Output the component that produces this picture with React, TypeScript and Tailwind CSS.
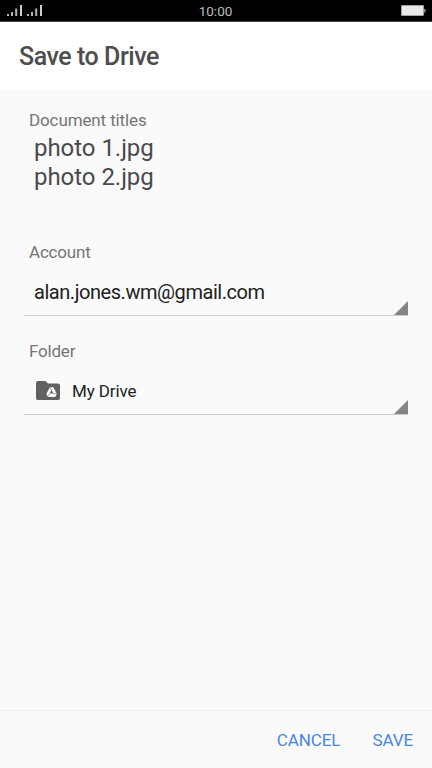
import type { ReactNode } from 'react';

function SignalIcon() {
  return (
    <svg width="16" height="12" viewBox="0 0 16 12" fill="#b4b4b4">
      <rect x="0" y="9" width="2" height="2" />
      <rect x="4" y="7" width="2" height="4" />
      <rect x="8.2" y="3.5" width="2" height="7.5" />
      <rect x="13" y="0" width="2" height="11" fill="#d0d0d0" />
    </svg>
  );
}

function BatteryIcon() {
  return (
    <svg width="25" height="12" viewBox="0 0 25 12">
      <rect x="0.5" y="0.5" width="22" height="10" rx="0.5" fill="#e8e8e8" stroke="#a0a0a0" />
      <rect x="23" y="4" width="1.5" height="3.5" fill="#8c8c8c" />
    </svg>
  );
}

function DriveFolderIcon() {
  return (
    <svg width="24" height="20" viewBox="0 0 24 20">
      <path
        d="M2.2 0H9.4L12 2.4H21.8A2.2 2.2 0 0 1 24 4.6V16.9A2.2 2.2 0 0 1 21.8 19.1H2.2A2.2 2.2 0 0 1 0 16.9V2.2A2.2 2.2 0 0 1 2.2 0Z"
        fill="#616161"
      />
      <path d="M13.9 6.2H17.2L20.9 12.8L19.2 15.9H12L10.3 12.9Z" fill="#fafafa" />
      <path d="M15.6 9.1L17.5 12.6H13.6Z" fill="#616161" />
      <path d="M13.6 12.6L12 15.6M17.2 12.7H20.8M13.9 6.4L15.5 9.3" stroke="#616161" strokeWidth="0.5" />
    </svg>
  );
}

interface SpinnerFieldProps {
  label: string;
  children: ReactNode;
}

function SpinnerField({ label, children }: SpinnerFieldProps) {
  return (
    <div className="h-[99px]">
      <p className="h-6 pl-[5px] text-[17px] leading-[25px] tracking-[-0.2px] text-[#757575]">{label}</p>
      <button className="flex h-[52px] w-full items-end justify-between border-b border-[#cbcbcb] text-left">
        <span className="flex h-full items-center pl-[10px] pt-[5px]">{children}</span>
        <svg width="14" height="14" viewBox="0 0 14 14" className="shrink-0">
          <path d="M14 0V14H0Z" fill="#858585" />
        </svg>
      </button>
    </div>
  );
}

export default function App() {
  return (
    <div className="flex h-[768px] w-[432px] flex-col bg-[#fafafa] font-['Roboto',sans-serif]">
      <div className="flex h-[22px] items-center justify-between border-b border-[#4a4a4a] bg-black pl-[7px] pr-[6px]">
        <div className="flex w-[58px] gap-1">
          <SignalIcon />
          <SignalIcon />
        </div>
        <span className="pt-px text-[13.5px] leading-5 text-[#bdbdbd]">10:00</span>
        <div className="flex w-[60px] justify-end">
          <BatteryIcon />
        </div>
      </div>

      <header className="flex h-[67px] items-center bg-white pl-[19px] pt-0.5">
        <h1 className="text-[25px] font-medium tracking-[-0.45px] text-[#4d4d4d]">Save to Drive</h1>
      </header>

      <main className="flex-1 px-6 pt-[19px]">
        <div className="h-[132px]">
          <p className="h-6 pl-[5px] text-[17px] leading-6 tracking-[-0.12px] text-[#757575]">
            Document titles
          </p>
          <div className="pl-[10px] pt-0.5 text-[24px] leading-[28.5px] tracking-[-0.04px] text-[#4a4a4a]">
            <p>photo 1.jpg</p>
            <p>photo 2.jpg</p>
          </div>
        </div>

        <SpinnerField label="Account">
          <span className="text-[20px] tracking-[-0.45px] text-[#212121]">alan.jones.wm@gmail.com</span>
        </SpinnerField>
        <SpinnerField label="Folder">
          <span className="flex items-center gap-3 pl-0.5">
            <DriveFolderIcon />
            <span className="pt-0.5 text-[17px] tracking-[-0.1px] text-[#212121]">My Drive</span>
          </span>
        </SpinnerField>
      </main>

      <footer className="flex h-[58px] items-center justify-end gap-8 border-t border-[#eeeeee] pr-[19px] pt-0.5 text-[17px] tracking-[-0.1px] text-[#4886e8]">
        <button>CANCEL</button>
        <button>SAVE</button>
      </footer>
    </div>
  );
}
